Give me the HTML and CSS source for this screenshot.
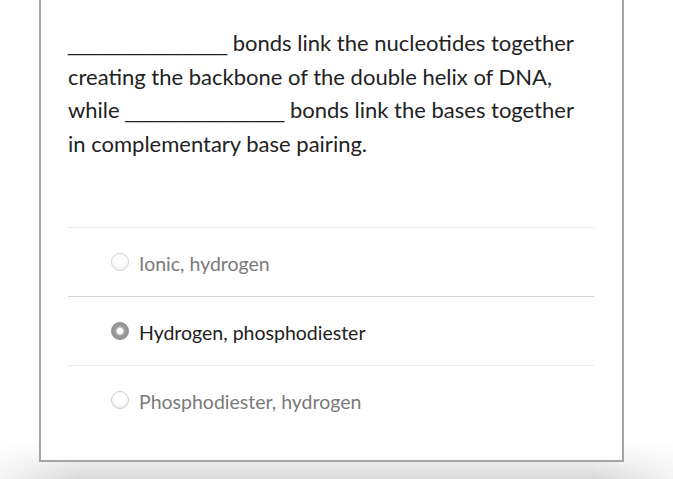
FILE: index.html
```html
<!DOCTYPE html>
<html lang="en">
<head>
<meta charset="utf-8">
<title>Question</title>
<link rel="stylesheet" href="styles.css">
</head>
<body>
<div class="page">
  <div class="card">
    <p class="question"><span class="blank">_____________</span> bonds link the nucleotides together creating the backbone of the double helix of DNA, while <span class="blank">_____________</span> bonds link the bases together in complementary base pairing.</p>
    <ul class="choices">
      <li class="choice"><span class="radio"></span><span class="label">Ionic, hydrogen</span></li>
      <li class="choice selected"><span class="radio checked"></span><span class="label">Hydrogen, phosphodiester</span></li>
      <li class="choice"><span class="radio"></span><span class="label">Phosphodiester, hydrogen</span></li>
    </ul>
  </div>
</div>
</body>
</html>
```

FILE: styles.css
```css
html, body {
  margin: 0;
  padding: 0;
}

body {
  width: 673px;
  height: 479px;
  overflow: hidden;
  font-family: Lato, "Open Sans", sans-serif;
  background:
    linear-gradient(to right, rgba(255,255,255,0.7), rgba(255,255,255,0) 12%, rgba(255,255,255,0) 88%, rgba(255,255,255,0.7)),
    linear-gradient(to bottom, #ffffff 440px, #f0f0f0 458px, #d9d9d9 479px);
}

.page {
  padding-left: 39px;
}

.card {
  box-sizing: border-box;
  width: 585px;
  height: 462px;
  background: #fff;
  border: 2px solid #a4a4a4;
  border-top: none;
  padding: 0 28px 0 27px;
}

.question {
  margin: 0;
  padding-top: 26px;
  padding-right: 12px;
  font-size: 22px;
  line-height: 33.6px;
  color: #222;
}

/* fill-in blank: a face whose underscores join into one rule */
.blank {
  font-family: "Liberation Sans", Arial, sans-serif;
  line-height: 1;
}

.choices {
  list-style: none;
  margin: 67px 0 0;
  padding: 0;
}

.choice {
  display: flex;
  align-items: center;
  gap: 10px;
  height: 68px;
  border-top: 1px solid #ebebeb;
  padding-left: 43px;
  font-size: 19.5px;
  color: #7a7a7a;
}

.choice.selected {
  border-top-color: #d4d4d4;
  color: #1e1e1e;
}

.radio {
  width: 18px;
  height: 18px;
  border-radius: 50%;
  box-sizing: border-box;
  border: 1px solid #cfcfcf;
  background: radial-gradient(circle at 50% 30%, #ffffff 40%, #ececec 100%);
  flex: none;
}

.radio.checked {
  border: 1px solid #8a8a8a;
  background:
    radial-gradient(circle, #ffffff 0, #ffffff 2.6px, #d0d0d0 3.4px, #9a9a9a 5px, #8e8e8e 100%);
}

.label {
  line-height: 1;
  padding-top: 2px;
}
```
